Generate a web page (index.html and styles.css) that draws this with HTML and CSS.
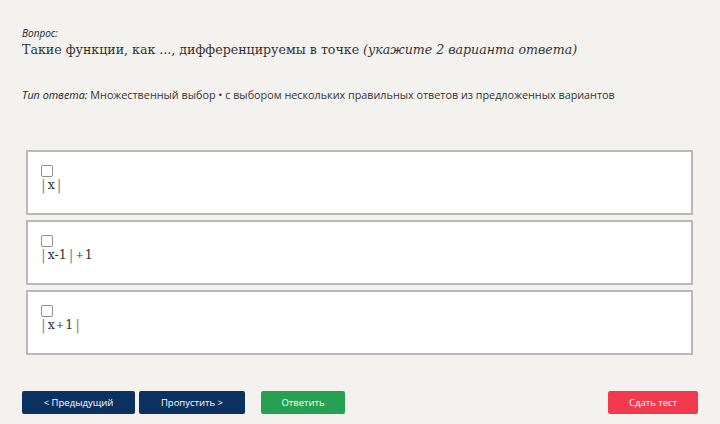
FILE: index.html
```html
<!DOCTYPE html>
<html lang="ru">
<head>
<meta charset="utf-8">
<link rel="stylesheet" href="styles.css">
</head>
<body>
<div class="page">
  <div class="q-label">Вопрос:</div>
  <div class="q-text">Такие функции, как ..., дифференцируемы в точке <i>(укажите 2 варианта ответа)</i></div>
  <div class="type"><i>Тип ответа:</i> Множественный выбор • с выбором нескольких правильных ответов из предложенных вариантов</div>
  <div class="answers">
    <label class="answer"><span class="cb"></span><span class="formula"><span class="bar bl">|</span>x<span class="bar br">|</span></span></label>
    <label class="answer"><span class="cb"></span><span class="formula"><span class="bar bl">|</span>x-1<span class="bar br">|</span><span class="op">+</span>1</span></label>
    <label class="answer"><span class="cb"></span><span class="formula"><span class="bar bl">|</span>x<span class="op tight">+</span>1<span class="bar br">|</span></span></label>
  </div>
  <div class="buttons">
    <button class="btn navy w1">&lt; Предыдущий</button>
    <button class="btn navy w2">Пропустить &gt;</button>
    <button class="btn green">Ответить</button>
    <span class="spacer"></span>
    <button class="btn red">Сдать тест</button>
  </div>
</div>
</body>
</html>
```
FILE: styles.css
```css
html, body { margin: 0; padding: 0; }
body {
  background: #f3f2ef;
  width: 720px;
  height: 424px;
  overflow: hidden;
  font-family: "Open Sans", "Noto Sans", sans-serif;
  color: #333;
}
.page { padding: 27px 22px 0 22px; }
.q-label { font-size: 10px; font-style: italic; line-height: 13px; color: #222; }
.q-text {
  margin-top: 1px;
  font-family: "DejaVu Serif", "Liberation Serif", serif;
  font-size: 12.6px;
  line-height: 18px;
  color: #333;
}
.q-text i { font-style: italic; }
.type { margin-top: 29px; font-size: 10.8px; line-height: 14px; color: #333; }
.type i { color: #222; }
.answers { margin: 48px 5px 0 4px; display: flex; flex-direction: column; gap: 5px; }
.answer {
  display: flex; flex-direction: column; align-items: flex-start;
  border: 2px solid #b9b9b7;
  background: #fff;
  padding: 13px 14px 0 13px;
  box-sizing: border-box;
  height: 65px;
}
.cb {
  width: 10px; height: 10px;
  border: 1px solid #8f8f8f;
  border-radius: 2px;
  background: #fff;
}
.formula {
  display: flex; align-items: center;
  font-family: "DejaVu Serif", serif;
  font-size: 12.5px;
  line-height: 16px;
  color: #333;
}
.bar { color: #8a8a8a; font-family: "DejaVu Sans", sans-serif; font-size: 14px; }
.bl { margin-right: 2px; }
.br { margin-left: 2px; }
.op { font-size: 10px; margin: 0 1px 0 2px; }
.op.tight { margin: 0 1px; }
.buttons { display: flex; margin-top: 36px; align-items: center; }
.btn {
  border: none; border-radius: 2px;
  height: 23px;
  color: #fff;
  font-family: "Open Sans", sans-serif;
  font-size: 9.5px;
  padding: 0;
}
.navy { background: #0b3161; }
.w1 { width: 113px; }
.w2 { width: 106px; margin-left: 4px; }
.green { background: #26a052; width: 84px; margin-left: 16px; }
.red { background: #f23a4e; width: 90px; }
.spacer { flex: 1; }
```
